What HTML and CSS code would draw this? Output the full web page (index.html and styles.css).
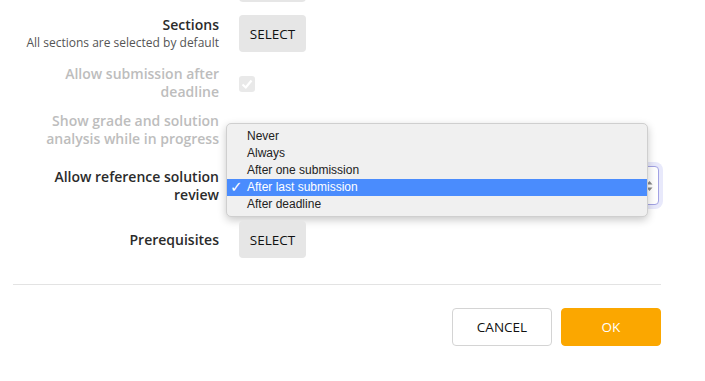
FILE: index.html
```html
<!DOCTYPE html>
<html lang="en">
<head>
    <meta charset="UTF-8">
    <meta name="viewport" content="width=device-width, initial-scale=1.0">
    <title>Assignment settings</title>
    <link rel="stylesheet" href="styles.css">
</head>
<body>
    <div class="modal">
        <!-- rows of the form -->
        <div class="row row-top">
            <div class="label"></div>
            <div class="control"><button class="btn-select"></button></div>
        </div>

        <div class="row row-sections">
            <div class="label">
                <div class="title">Sections</div>
                <div class="hint">All sections are selected by default</div>
            </div>
            <div class="control"><button class="btn-select">SELECT</button></div>
        </div>

        <div class="row row-late">
            <div class="label disabled">Allow submission after deadline</div>
            <div class="control">
                <span class="checkbox">
                    <svg width="16" height="16" viewBox="0 0 16 16"><path d="M3.5 8.5 L6.8 11.5 L12.5 4.5" fill="none" stroke="#fff" stroke-width="2.2"/></svg>
                </span>
            </div>
        </div>

        <div class="row row-grade">
            <div class="label disabled">Show grade and solution analysis while in progress</div>
            <div class="control">
                <span class="checkbox">
                    <svg width="16" height="16" viewBox="0 0 16 16"><path d="M3.5 8.5 L6.8 11.5 L12.5 4.5" fill="none" stroke="#fff" stroke-width="2.2"/></svg>
                </span>
            </div>
        </div>

        <div class="row row-review">
            <div class="label">Allow reference solution review</div>
            <div class="control">
                <div class="select">
                    <svg class="arrows" width="7" height="12" viewBox="0 0 7 12"><path d="M0.5 4.5 L3.5 1 L6.5 4.5 Z M0.5 7.5 L3.5 11 L6.5 7.5 Z" fill="#8a8a8a"/></svg>
                </div>
                <!-- open dropdown menu -->
                <ul class="menu">
                    <li>Never</li>
                    <li>Always</li>
                    <li>After one submission</li>
                    <li class="active"><span class="tick">&#10003;</span>After last submission</li>
                    <li>After deadline</li>
                </ul>
            </div>
        </div>

        <div class="row row-prereq">
            <div class="label">Prerequisites</div>
            <div class="control"><button class="btn-select">SELECT</button></div>
        </div>

        <div class="footer">
            <button class="btn-cancel">CANCEL</button>
            <button class="btn-ok">OK</button>
        </div>
    </div>
</body>
</html>
```

FILE: styles.css
```css
*{
    margin: 0;
    padding: 0;
    box-sizing: border-box;
}

body{
    font-family: "Open Sans", "Liberation Sans", sans-serif;
    color: #2b2b2b;
    background: #fff;
    overflow: hidden;
}

.modal{
    width: 648px;
    margin-left: 13px;
}

.row{
    display: grid;
    grid-template-columns: 206px 1fr;
    column-gap: 20px;
    align-items: center;
}

.row-top{
    margin-top: -35px;
    height: 37px;
}

.row-sections{
    margin-top: 13px;
    height: 37px;
}

.row-late{
    margin-top: 13px;
    height: 35px;
}

.row-grade{
    margin-top: 12px;
    height: 35px;
}

.row-review{
    margin-top: 19px;
    height: 39px;
}

.row-prereq{
    margin-top: 16px;
    height: 37px;
}

.label{
    text-align: right;
    font-size: 14px;
    font-weight: 600;
    line-height: 17.5px;
}

.label .hint{
    font-size: 12px;
    font-weight: 400;
    color: #555;
    line-height: 17px;
}

.label.disabled{
    color: #bdbdbd;
}

.control{
    position: relative;
}

.btn-select{
    width: 67px;
    height: 37px;
    border: none;
    border-radius: 4px;
    background: #e6e6e6;
    font-family: "Open Sans", sans-serif;
    font-size: 13.5px;
    color: #111;
    display: block;
}

.checkbox{
    display: block;
    width: 16px;
    height: 16px;
    border-radius: 3px;
    background: #e9e9e9;
    margin-top: 2px;
}

.checkbox svg{
    display: block;
}

.select{
    width: 420px;
    height: 39px;
    border: 1px solid #a3a3e4;
    border-radius: 4px;
    box-shadow: 0 0 0 4px #e8e9fb;
    display: flex;
    align-items: center;
    justify-content: flex-end;
    padding: 0 5px 0 12px;
    background: #fff;
}

.menu{
    position: absolute;
    left: -13px;
    top: -43px;
    width: 422px;
    list-style: none;
    background: #f0f0f0;
    border: 1px solid #cfcfcf;
    border-radius: 5px;
    box-shadow: 0 3px 9px rgba(0,0,0,0.22);
    padding: 4px 0 3px;
    font-family: "Liberation Sans", Arial, sans-serif;
    font-size: 12px;
    color: #222;
}

.menu li{
    height: 17px;
    line-height: 17px;
    padding-left: 20px;
    position: relative;
}

.menu li.active{
    background: #4a8cfd;
    color: #fff;
}

.menu .tick{
    position: absolute;
    left: 3px;
    top: 0;
    font-family: "DejaVu Sans", sans-serif;
    font-size: 15px;
    font-weight: bold;
    line-height: 17px;
}

.footer{
    margin-top: 26px;
    border-top: 1px solid #e3e3e3;
    padding-top: 23px;
    display: flex;
    justify-content: flex-end;
    gap: 9px;
}

.footer button{
    width: 100px;
    height: 38px;
    border-radius: 4px;
    font-family: "Open Sans", sans-serif;
    font-size: 13.5px;
}

.btn-cancel{
    background: #fff;
    border: 1px solid #d4d4d4;
    color: #111;
}

.btn-ok{
    background: #fba700;
    border: 1px solid #fba700;
    color: #fff;
}
```
